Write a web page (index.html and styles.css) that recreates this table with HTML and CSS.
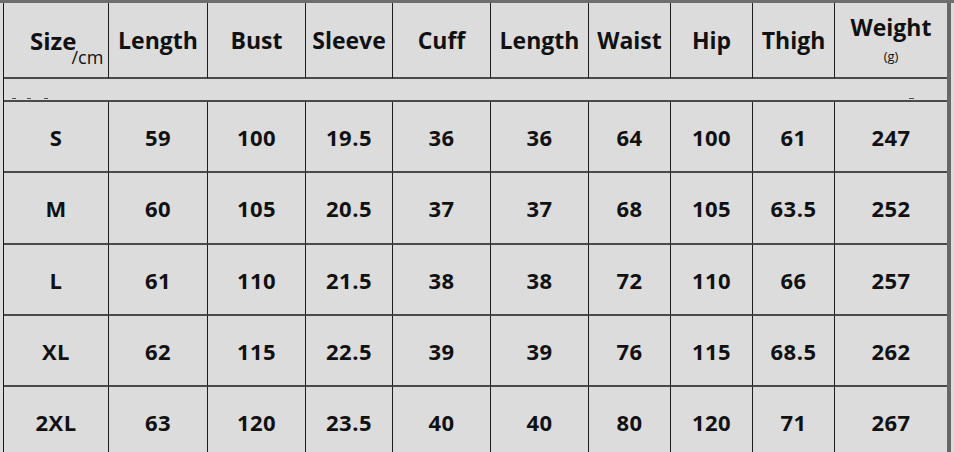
FILE: index.html
```html
<!DOCTYPE html>
<html>
<head>
<meta charset="utf-8">
<link rel="stylesheet" href="styles.css">
</head>
<body>
<div class="topband"></div>
<div class="sheet">
  <div class="cell head sizecell"><span class="size">Size</span><span class="unit">/cm</span></div>
  <div class="cell head">Length</div>
  <div class="cell head">Bust</div>
  <div class="cell head">Sleeve</div>
  <div class="cell head">Cuff</div>
  <div class="cell head">Length</div>
  <div class="cell head">Waist</div>
  <div class="cell head">Hip</div>
  <div class="cell head">Thigh</div>
  <div class="cell head last weight"><span>Weight</span><span class="g">(g)</span></div>

  <div class="gap"><span class="dash d1"></span><span class="dash d2"></span><span class="dash d3"></span><span class="dash d4"></span></div>

  <div class="cell r1">S</div><div class="cell r1">59</div><div class="cell r1">100</div><div class="cell r1">19.5</div><div class="cell r1">36</div><div class="cell r1">36</div><div class="cell r1">64</div><div class="cell r1">100</div><div class="cell r1">61</div><div class="cell r1 last">247</div>
  <div class="cell r2">M</div><div class="cell r2">60</div><div class="cell r2">105</div><div class="cell r2">20.5</div><div class="cell r2">37</div><div class="cell r2">37</div><div class="cell r2">68</div><div class="cell r2">105</div><div class="cell r2">63.5</div><div class="cell r2 last">252</div>
  <div class="cell r1">L</div><div class="cell r1">61</div><div class="cell r1">110</div><div class="cell r1">21.5</div><div class="cell r1">38</div><div class="cell r1">38</div><div class="cell r1">72</div><div class="cell r1">110</div><div class="cell r1">66</div><div class="cell r1 last">257</div>
  <div class="cell r1">XL</div><div class="cell r1">62</div><div class="cell r1">115</div><div class="cell r1">22.5</div><div class="cell r1">39</div><div class="cell r1">39</div><div class="cell r1">76</div><div class="cell r1">115</div><div class="cell r1">68.5</div><div class="cell r1 last">262</div>
  <div class="cell r1">2XL</div><div class="cell r1">63</div><div class="cell r1">120</div><div class="cell r1">23.5</div><div class="cell r1">40</div><div class="cell r1">40</div><div class="cell r1">80</div><div class="cell r1">120</div><div class="cell r1">71</div><div class="cell r1 last">267</div>
</div>
</body>
</html>
```

FILE: styles.css
```css
html, body {
  margin: 0;
  padding: 0;
  background: #dcdcdc;
  overflow: hidden;
}
body {
  width: 954px;
  height: 452px;
  font-family: "Open Sans", "DejaVu Sans", sans-serif;
  color: #111;
}
.topband {
  height: 3px;
  background: #6e6e6e;
}
.sheet {
  margin-left: 3px;
  width: 943px;
  border-left: 1px solid #1a1a1a;
  border-right: 4px solid #676767;
  display: grid;
  grid-template-columns: 105px 99px 98px 87px 98px 98px 82px 82px 82px 112px;
  grid-template-rows: 76px 23px 71px 72px 71px 71px 71px;
}
.cell {
  box-sizing: border-box;
  border-right: 1px solid #1e1e1e;
  border-bottom: 2px solid #4a4a4a;
  display: flex;
  align-items: center;
  justify-content: center;
  font-weight: 700;
  font-size: 22px;
  letter-spacing: 0.5px;
  background: #dcdcdc;
}
.cell.last {
  border-right: none;
}
.head {
  font-size: 23px;
  letter-spacing: 0;
}
.sizecell {
  justify-content: flex-start;
  align-items: flex-start;
  padding-left: 26px;
  padding-top: 26px;
}
.size {
  font-size: 24px;
  line-height: 24px;
}
.unit {
  font-size: 18px;
  font-weight: 400;
  line-height: 18px;
  margin-top: 19px;
  margin-left: -5px;
}
.weight {
  flex-direction: column;
  justify-content: flex-start;
  padding-top: 8px;
}
.weight .g {
  font-size: 13px;
  font-weight: 400;
  margin-top: 4px;
}
.gap {
  grid-column: 1 / -1;
  box-sizing: border-box;
  border-bottom: 2px solid #4a4a4a;
  position: relative;
}
.dash {
  position: absolute;
  top: 19px;
  height: 1px;
  width: 4px;
  background: #555;
}
.d1 { left: 8px; }
.d2 { left: 23px; }
.d3 { left: 40px; }
.d4 { left: 905px; width: 5px; }
```
